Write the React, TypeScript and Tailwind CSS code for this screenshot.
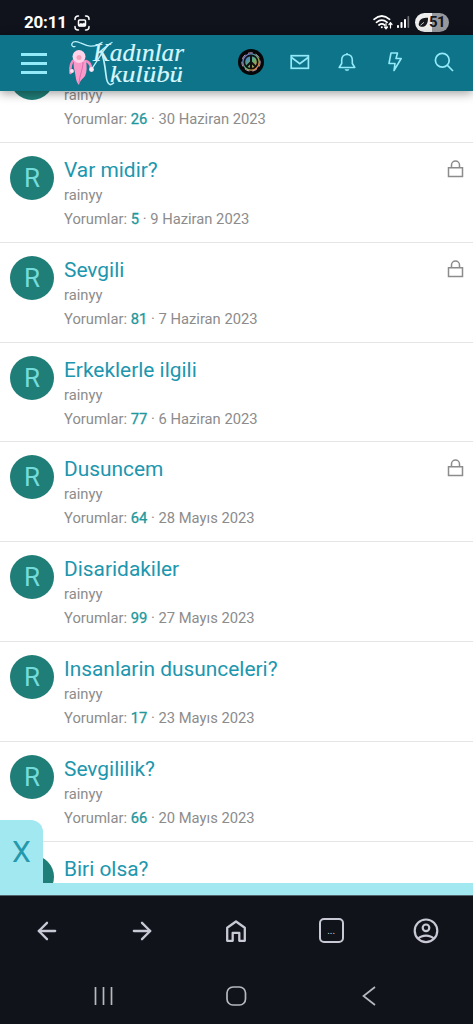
import { ArrowLeft, ArrowRight } from 'lucide-react';

type Topic = {
    id: number;
    title?: string;
    replies?: number;
    date?: string;
    locked?: boolean;
};

const topics: Topic[] = [
    { id: 1, replies: 26, date: '30 Haziran 2023' },
    { id: 2, title: 'Var midir?', replies: 5, date: '9 Haziran 2023', locked: true },
    { id: 3, title: 'Sevgili', replies: 81, date: '7 Haziran 2023', locked: true },
    { id: 4, title: 'Erkeklerle ilgili', replies: 77, date: '6 Haziran 2023' },
    { id: 5, title: 'Dusuncem', replies: 64, date: '28 Mayıs 2023', locked: true },
    { id: 6, title: 'Disaridakiler', replies: 99, date: '27 Mayıs 2023' },
    { id: 7, title: 'Insanlarin dusunceleri?', replies: 17, date: '23 Mayıs 2023' },
    { id: 8, title: 'Sevgililik?', replies: 66, date: '20 Mayıs 2023' },
    { id: 9, title: 'Biri olsa?' },
];

function StatusBar() {
    return (
        <div className="flex h-[35px] shrink-0 items-start bg-[#10131c] pl-6 pr-6 pt-[13px] text-white">
            <span className="text-[17px] font-bold leading-[19px] tracking-[-0.2px]">20:11</span>
            <svg className="ml-[7px] mt-0.5" width="16" height="16" viewBox="0 0 16 16" fill="none" stroke="currentColor" strokeWidth="1.5" strokeLinecap="round">
                <path d="M1 4.500V4a3 3 0 0 1 3-3h.5M11.500 1H12a3 3 0 0 1 3 3v.5M15 11.500V12a3 3 0 0 1-3 3h-.5M4.500 15H4a3 3 0 0 1-3-3v-.5" />
                <rect x="4.500" y="5" width="7" height="6" rx="1" />
                <path d="M5 10.800V9.500l2-1.300 1 .8 2-1 1.200.7v2.100z" fill="currentColor" strokeWidth=".5" />
            </svg>

            {/* Wifi, signal, battery */}
            <div className="ml-auto flex items-start">
                <svg className="mt-0.5" width="20" height="16" viewBox="0 0 20 16" fill="none" stroke="currentColor" strokeWidth="1.7" strokeLinecap="round">
                    <path d="M1 4.300Q8.800-2.300 16.600 4.300M3.500 7.300q5.300-4.400 10.600 0M6 10q2.800-2.300 5.600 0" />
                    <circle cx="8.800" cy="12.300" r="1" fill="currentColor" stroke="none" />
                    <path d="M13 8.500v5M11.500 12l1.500 1.800 1.500-1.800M17.500 13V8M16 9.500l1.500-1.800L19 9.500" strokeWidth="1.200" />
                </svg>
                <svg className="ml-1 mt-[3px]" width="13" height="13" viewBox="0 0 13 13" fill="currentColor">
                    <rect x="0" y="9" width="2" height="3" rx=".8" />
                    <rect x="3.500" y="6" width="2" height="6" rx=".8" />
                    <rect x="7" y="3" width="2" height="9" rx=".8" />
                    <rect x="10.500" y="0" width="1.700" height="12" rx=".8" opacity=".4" />
                </svg>
                <div className="ml-[5px] flex h-[19px] w-[34px] items-center rounded-full bg-gradient-to-r from-[#eeeeee] from-50% to-[#98999c] to-50% pl-[3px] text-[#16181e]">
                    <svg width="11" height="11" viewBox="0 0 11 11">
                        <path d="M10 .8C5.500.7 1.500 2 1.200 5.500.2 7.200.8 8.300 1.500 9c.6.8 3 1.200 5.200.2C9.800 7.500 10 3.500 10 .8z" fill="currentColor" />
                        <path d="M2.500 8.200L6 5.300" stroke="#eee" strokeWidth=".8" />
                    </svg>
                    <span className="text-[15px] font-bold leading-[19px] tracking-[-0.5px]">51</span>
                </div>
            </div>
        </div>
    );
}

function Logo() {
    return (
        <svg className="ml-[21px]" width="120" height="48" viewBox="68 38 120 48">
            <g fill="#d7f7ff" stroke="#d7f7ff" strokeWidth=".2" fontFamily="'Liberation Serif', serif" fontStyle="italic">
                <text x="93" y="60" fontSize="26" textLength="91" lengthAdjust="spacingAndGlyphs">Kadınlar</text>
                <text x="110" y="80.500" fontSize="24" textLength="73" lengthAdjust="spacingAndGlyphs">kulübü</text>
            </g>
            {/* Swashes around the initial */}
            <g fill="none" stroke="#bdf1fc" strokeLinecap="round">
                <path d="M75 45.500c-2 .8-4-.8-3-3 1.200-2.500 5-2 8.500-.5C86 44.500 93 48 102 41.500" strokeWidth="1.300" />
                <path d="M112 41.500c-6 2-11 13-20 26" strokeWidth="1.300" />
                <path d="M101 51c3 5 4 14 5 23 .5 5 1.500 9 4 9.500 1.500.2 2.500-.5 3.500-1.500" strokeWidth="1.700" />
            </g>
            {/* Figure */}
            <path d="M74 59c-3 2-4 7-3.500 13M86 60c3 1 5 4 5 8" fill="none" stroke="#f48cc0" strokeWidth="2.600" strokeLinecap="round" />
            <path d="M74 60c2-2 9-2 12 0 1 5 1 11-1 15-2 3-5 4-6 9-3-3-3-7-4-12-1-5-2-8-1-12z" fill="#f99acb" />
            <path d="M83 61c0 7-3 12-4 21" fill="none" stroke="#d96dac" />
            <circle cx="79" cy="55.500" r="6.500" fill="#ffd3e9" />
            <circle cx="79" cy="56.500" r="2.500" fill="#f5a2bc" />
            <circle cx="72" cy="70" r="1.900" fill="#ffe6f3" />
            <circle cx="91.500" cy="68.500" r="2.400" fill="#ffe6f3" />
        </svg>
    );
}

function Header() {
    return (
        <header className="relative z-10 flex h-14 shrink-0 items-center bg-[#0d748a] pl-[21px] text-[#93eaf9] shadow-[0_2px_10px_rgba(0,0,0,0.4)]">
            <div className="flex w-[26px] flex-col gap-1.5">
                <span className="h-[3px] bg-current"></span>
                <span className="h-[3px] bg-current"></span>
                <span className="h-[3px] bg-current"></span>
            </div>
            <Logo />

            <div className="ml-auto flex items-center pb-0.5 pr-[19px]">
                {/* Peace sign avatar */}
                <svg width="26" height="26" viewBox="0 0 26 26" fill="none">
                    <defs>
                        <linearGradient id="peace" x1="0" y1="0" x2="1" y2="1">
                            <stop offset="0" stopColor="#ad62d2" />
                            <stop offset=".3" stopColor="#478ab9" />
                            <stop offset=".55" stopColor="#69b16c" />
                            <stop offset=".8" stopColor="#de8e45" />
                            <stop offset="1" stopColor="#d64f73" />
                        </linearGradient>
                    </defs>
                    <circle cx="13" cy="13" r="13" fill="#050709" />
                    <circle cx="13" cy="13" r="8.800" fill="url(#peace)" />
                    <circle cx="13" cy="13" r="6.700" stroke="#111" strokeWidth="1.700" />
                    <path d="M13 6v14M13 13l-5 5M13 13l5 5" stroke="#111" strokeWidth="2" />
                    <circle cx="13" cy="13" r="9.200" stroke="#dfb7d8" strokeWidth=".8" strokeDasharray="5 3" />
                </svg>
                <svg className="ml-[26px]" width="20" height="16" viewBox="0 0 20 16" fill="none" stroke="currentColor" strokeWidth="1.700">
                    <rect x="1.200" y="1.700" width="17.200" height="12.600" />
                    <path d="M1.500 3.500l8.300 6.300 8.300-6.300" />
                </svg>
                <svg className="ml-[28px]" width="18" height="20" viewBox="0 0 18 20" fill="none" stroke="currentColor" strokeWidth="1.600" strokeLinejoin="round">
                    <path d="M9 2.500c-3.500 0-5.300 2.400-5.300 5.500v3.500L1.200 15.500h15.600l-2.500-4V8c0-3.100-1.800-5.500-5.300-5.500zM9 1v1.500" />
                    <path d="M7 17.500h4c-.3 1.600-3.700 1.600-4 0z" fill="currentColor" strokeWidth=".5" />
                </svg>
                <svg className="ml-[31px]" width="16" height="20" viewBox="0 0 16 20" fill="none" stroke="currentColor" strokeWidth="1.600" strokeLinejoin="round">
                    <path d="M4 1h6.500L9 6.500h5.200L7 18.500l1-7H2z" />
                </svg>
                <svg className="ml-[31px]" width="20" height="20" viewBox="0 0 20 20" fill="none" stroke="currentColor" strokeWidth="1.700">
                    <circle cx="8.300" cy="8.300" r="6.900" />
                    <path d="M13.200 13.200l5.800 5.800" />
                </svg>
            </div>
        </header>
    );
}

function TopicRow({ title, replies, date, locked }: Topic) {
    return (
        <div className="flex h-[99.850px] shrink-0 border-b border-[#e5e5e5] pl-2.5 pt-[13px]">
            <div className="flex size-11 shrink-0 items-center justify-center rounded-full bg-[#207e78] text-[26px] leading-none text-[#74dcda]">
                R
            </div>
            <div className="ml-2.5 text-[14.750px] leading-6 text-[#8c8c8c]">
                <h3 className="h-[27px] text-[20.900px] leading-7 text-[#2096ae]">{title}</h3>
                {date && (
                    <>
                        <p>rainyy</p>
                        <p>
                            Yorumlar: <span className="text-[#22989c] [-webkit-text-stroke:0.3px]">{replies}</span> · {date}
                        </p>
                    </>
                )}
            </div>
            {locked && (
                <svg className="ml-auto mr-[9px] mt-1" width="17" height="18" viewBox="0 0 17 18" fill="none" stroke="#8c8c8c" strokeWidth="1.500">
                    <path d="M1.500 7.700h14v8.800h-14zM4.500 7.500V5a4 4 0 0 1 8 0v2.500" />
                </svg>
            )}
        </div>
    );
}

function BottomNav() {
    return (
        <nav className="shrink-0 border-t border-[#53636c] bg-[#10131a] text-[#c8c9d5]">
            <div className="grid h-[69px] grid-cols-5 place-items-center">
                <ArrowLeft size={28} strokeWidth={2} />
                <ArrowRight size={28} strokeWidth={2} />
                <svg width="26" height="26" viewBox="0 0 26 26" fill="none" stroke="currentColor" strokeWidth="2.300" strokeLinejoin="round">
                    <path d="M4.200 9.800L13 3.500l8.800 6.300v13h-5.500v-8H9.700v8H4.200z" />
                </svg>
                <span className="flex size-[25px] items-center justify-center rounded-[5px] border-2 border-current text-[10px] leading-none">
                    ...
                </span>
                <svg width="26" height="26" viewBox="0 0 26 26" fill="none" stroke="currentColor" strokeWidth="2.200">
                    <circle cx="13" cy="12.800" r="11.300" />
                    <circle cx="13" cy="9.800" r="3.300" />
                    <path d="M5 20.800c4-4.300 12-4.300 16 0" />
                </svg>
            </div>

            {/* System buttons */}
            <div className="flex h-[59px] items-start justify-between pl-[93px] pr-[97px] pt-[21px] text-[#b8b9bf]">
                <svg width="20" height="20" viewBox="0 0 20 20" stroke="currentColor" strokeWidth="1.700">
                    <path d="M2.500 1v18M10.500 1v18M18.500 1v18" />
                </svg>
                <svg className="mr-[3px]" width="21" height="20" viewBox="0 0 21 20" fill="none" stroke="currentColor" strokeWidth="1.700">
                    <rect x="1" y="1" width="18.500" height="18" rx="6" />
                </svg>
                <svg width="14" height="20" viewBox="0 0 14 20" fill="none" stroke="currentColor" strokeWidth="1.700">
                    <path d="M13 1L1.500 10 13 19" />
                </svg>
            </div>
        </nav>
    );
}

export default function App() {
    return (
        <div className="flex h-[1024px] w-[473px] flex-col overflow-hidden bg-white font-['Roboto',sans-serif]">
            <StatusBar />
            <Header />
            <main className="relative min-h-0 flex-1 overflow-hidden">
                <div className="-mt-[48px] flex flex-col">
                    {topics.map((topic) => (
                        <TopicRow key={topic.id} {...topic} />
                    ))}
                </div>
                {/* Close tab for the bottom ad strip */}
                <button className="absolute bottom-0 left-0 h-[75px] w-[43px] rounded-tr-xl bg-[#a2e8f1] pb-3 text-[30px] leading-none text-[#2499ab]">
                    X
                </button>
                <div className="absolute bottom-0 left-0 h-3 w-full bg-[#a2e8f1]"></div>
            </main>
            <BottomNav />
        </div>
    );
}
